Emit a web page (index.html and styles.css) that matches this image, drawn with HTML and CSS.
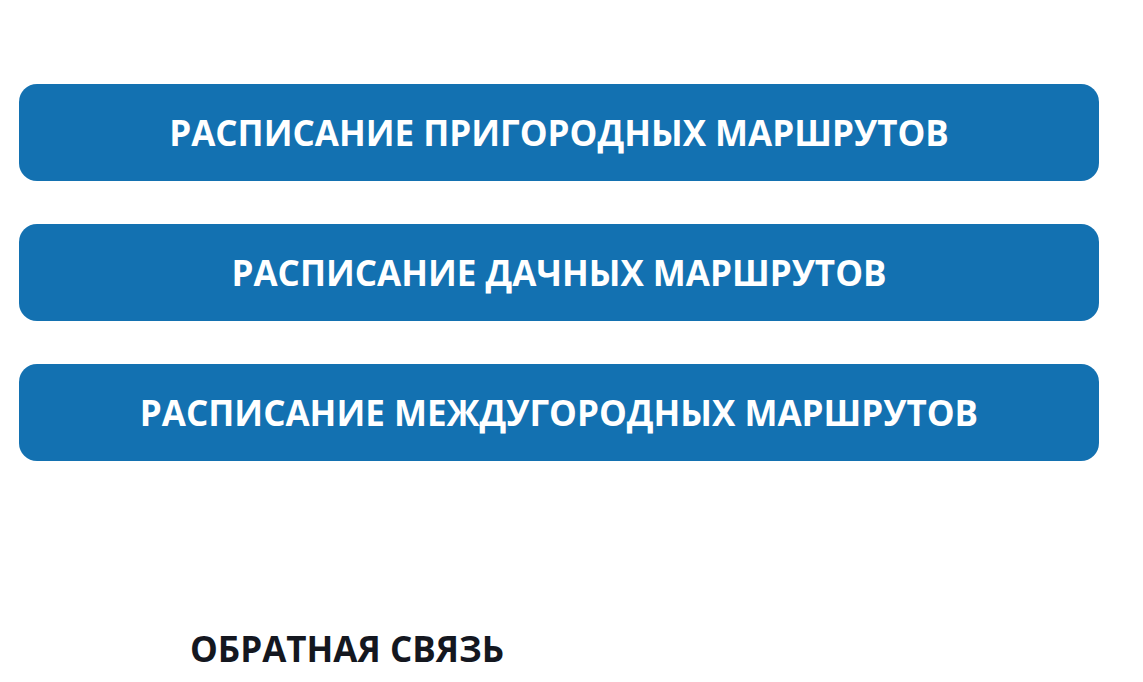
FILE: index.html
```html
<!DOCTYPE html>
<html lang="ru">
<head>
<meta charset="utf-8">
<link rel="stylesheet" href="styles.css">
</head>
<body>
<main class="page">
  <nav class="schedules">
    <a class="btn" href="#">РАСПИСАНИЕ ПРИГОРОДНЫХ МАРШРУТОВ</a>
    <a class="btn" href="#">РАСПИСАНИЕ ДАЧНЫХ МАРШРУТОВ</a>
    <a class="btn" href="#">РАСПИСАНИЕ МЕЖДУГОРОДНЫХ МАРШРУТОВ</a>
  </nav>
  <footer class="footer">
    <h2 class="footer-title">ОБРАТНАЯ СВЯЗЬ</h2>
  </footer>
</main>
</body>
</html>
```
FILE: styles.css
```css
html, body {
  margin: 0;
  padding: 0;
  background: #ffffff;
  font-family: "Open Sans", "Noto Sans", sans-serif;
}
.page {
  padding: 84px 0 0 19px;
  width: 1080px;
}
.schedules {
  display: flex;
  flex-direction: column;
  gap: 43px;
}
.btn {
  display: flex;
  align-items: center;
  justify-content: center;
  height: 97px;
  border-radius: 18px;
  background: #1371b1;
  color: #ffffff;
  text-decoration: none;
  font-weight: 700;
  font-size: 35px;
}
.footer {
  padding: 164px 0 0 171px;
}
.footer-title {
  margin: 0;
  font-size: 35px;
  font-weight: 700;
  color: #14171f;
}
```
